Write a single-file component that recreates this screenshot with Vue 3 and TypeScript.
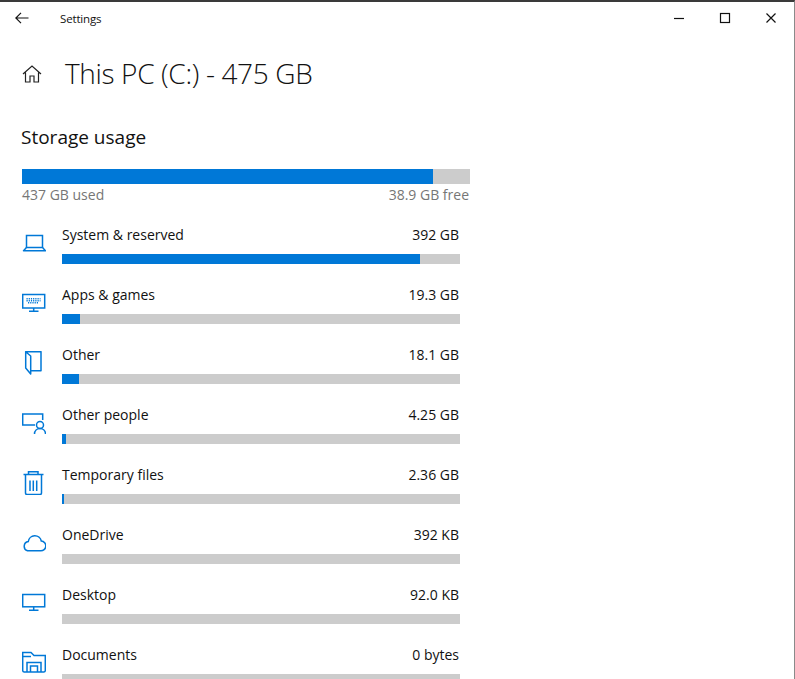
<script setup lang="ts">
interface Row { name: string; size: string; fill: number; icon: string }
const rows: Row[] = [
  { name: 'System & reserved', size: '392 GB', fill: 358, icon: 'laptop' },
  { name: 'Apps & games', size: '19.3 GB', fill: 18, icon: 'apps' },
  { name: 'Other', size: '18.1 GB', fill: 17, icon: 'other' },
  { name: 'Other people', size: '4.25 GB', fill: 4, icon: 'people' },
  { name: 'Temporary files', size: '2.36 GB', fill: 2, icon: 'trash' },
  { name: 'OneDrive', size: '392 KB', fill: 0, icon: 'cloud' },
  { name: 'Desktop', size: '92.0 KB', fill: 0, icon: 'desktop' },
  { name: 'Documents', size: '0 bytes', fill: 0, icon: 'docs' },
]
</script>

<template>
  <div class="window">
    <header class="titlebar">
      <svg class="back" width="14" height="12" viewBox="0 0 14 12"><path d="M13.500 6H1M6 .8 .8 6 6 11.200" /></svg>
      <span class="app">Settings</span>
      <div class="controls">
        <svg width="12" height="12" viewBox="0 0 12 12"><path d="M1 6.500h10" /></svg>
        <svg width="12" height="12" viewBox="0 0 12 12"><rect x="1.500" y="1.500" width="9" height="9" /></svg>
        <svg width="12" height="12" viewBox="0 0 12 12"><path d="M1.500 1.500l9 9M10.500 1.500l-9 9" /></svg>
      </div>
    </header>

    <div class="heading">
      <svg class="home" width="20" height="18" viewBox="0 0 20 18"><path d="M1 9 10 1l9 8M3.500 7.500V17h4.500v-6h4v6h4.500V7.500" /></svg>
      <h1>This PC (C:) - 475 GB</h1>
    </div>

    <h2>Storage usage</h2>

    <div class="summary">
      <div class="track big"><div class="fill" :style="{ width: '411px' }"></div></div>
      <div class="summary-text"><span>437 GB used</span><span>38.9 GB free</span></div>
    </div>

    <ul class="list">
      <li v-for="row in rows" :key="row.name" class="row">
        <svg class="icon" width="24" height="24" viewBox="0 0 24 24">
          <g v-if="row.icon === 'laptop'">
            <path d="M4.500 17V4.500h16V17" />
            <path d="M4.500 16.500h16l3 3.300H1.500z" stroke-linejoin="round" />
          </g>
          <g v-else-if="row.icon === 'apps'">
            <rect x="0.700" y="3.500" width="22" height="13.500" />
            <path d="M11.700 17v3M7 20.200h9.500" />
            <path d="M4.500 7.700h14M4.500 9.700h14M6 11.700h11" stroke-dasharray="1.200 1" />
          </g>
          <g v-else-if="row.icon === 'other'">
            <path d="M8.700 19.700H19V.700H3.700V17L8.700 23V5L3.700.700" stroke-linejoin="round" />
          </g>
          <g v-else-if="row.icon === 'people'">
            <path d="M13 14H.700V3H20.700V9" />
            <circle cx="18" cy="14" r="3.500" />
            <path d="M12.500 23c0-3.500 2.500-5.500 5.500-5.500s5.500 2 5.500 5.500" />
          </g>
          <g v-else-if="row.icon === 'trash'">
            <path d="M1.500 3.500h20M6.500 3.500V.700h9.500v2.800" />
            <path d="M3.500 3.500V22a1.500 1.500 0 0 0 1.500 1.500h13a1.500 1.500 0 0 0 1.500-1.500V3.500" />
            <path d="M8 9.500v10.500M11.300 9.500v10.500M14.700 9.500v10.500" />
          </g>
          <g v-else-if="row.icon === 'cloud'">
            <path d="M5.500 19.800H18.500a4.800 4.800 0 0 0 .8-9.800A6.600 6.600 0 0 0 6.300 10.500a4.800 4.800 0 0 0-.8 9.300z" />
          </g>
          <g v-else-if="row.icon === 'desktop'">
            <rect x="0.700" y="3.500" width="22" height="12.300" />
            <path d="M11.700 16v3M7 19.300h9.500" />
          </g>
          <g v-else>
            <path d="M.700 19.500V1.500H9L12 4.500H23.300V19.500a1.500 1.500 0 0 1-1.500 1.500H2.200a1.500 1.500 0 0 1-1.500-1.500z" />
            <path d="M.700 5.500H9" />
            <path d="M5 21V11.500H19V21M8.500 21V15H15.500V21" />
          </g>
        </svg>
        <div class="body">
          <div class="labels"><span>{{ row.name }}</span><span>{{ row.size }}</span></div>
          <div class="track small"><div class="fill" :style="{ width: row.fill + 'px' }"></div></div>
        </div>
      </li>
    </ul>
  </div>
</template>

<style>
html, body { margin: 0; background: #fff; overflow: hidden; }
</style>

<style scoped>
.window {
  width: 795px;
  height: 679px;
  box-sizing: border-box;
  overflow: hidden;
  background: #fff;
  border-top: 2px solid #3a3a3a;
  border-right: 1px solid #8a8a8a;
  font-family: "Open Sans", "Noto Sans", sans-serif;
  color: #111;
}
svg { fill: none; stroke: currentColor; stroke-width: 1.2; flex: none; }
.icon { stroke-width: 1.5; }
.titlebar { display: flex; align-items: center; height: 32px; padding: 0 0 0 15px; }
.back { margin-right: 31px; color: #111; }
.app { font-size: 11.500px; letter-spacing: -0.150px; }
.controls { margin-left: auto; display: flex; gap: 34px; padding-right: 17px; color: #111; }
.heading { display: flex; align-items: center; height: 40px; margin-top: 19px; padding-left: 22px; }
.home { color: #222; margin-right: 23px; position: relative; top: 1px; }
h1 { margin: 0; font-size: 28px; font-weight: 300; letter-spacing: -0.350px; color: #111; }
h2 { margin: 31px 0 0 21px; font-size: 19px; font-weight: 400; line-height: 26px; letter-spacing: 0; }
.summary { width: 448px; margin: 19px 0 0 22px; }
.track { background: #cccccc; }
.fill { height: 100%; background: #0078d7; }
.big { height: 15px; }
.summary-text { display: flex; justify-content: space-between; font-size: 14px; line-height: 20px; color: #767676; letter-spacing: 0; margin-top: 1px; padding-right: 1px; }
.list { list-style: none; margin: 19px 0 0; padding: 0 0 0 22px; }
.row { display: flex; height: 60px; width: 438px; }
.icon { margin-top: 7px; margin-right: 16px; color: #0078d7; }
.body { flex: 1; }
.labels { display: flex; justify-content: space-between; font-size: 14px; line-height: 20px; letter-spacing: 0; padding-top: 1px; padding-right: 1px; }
.small { height: 10px; margin-top: 9px; }
</style>
